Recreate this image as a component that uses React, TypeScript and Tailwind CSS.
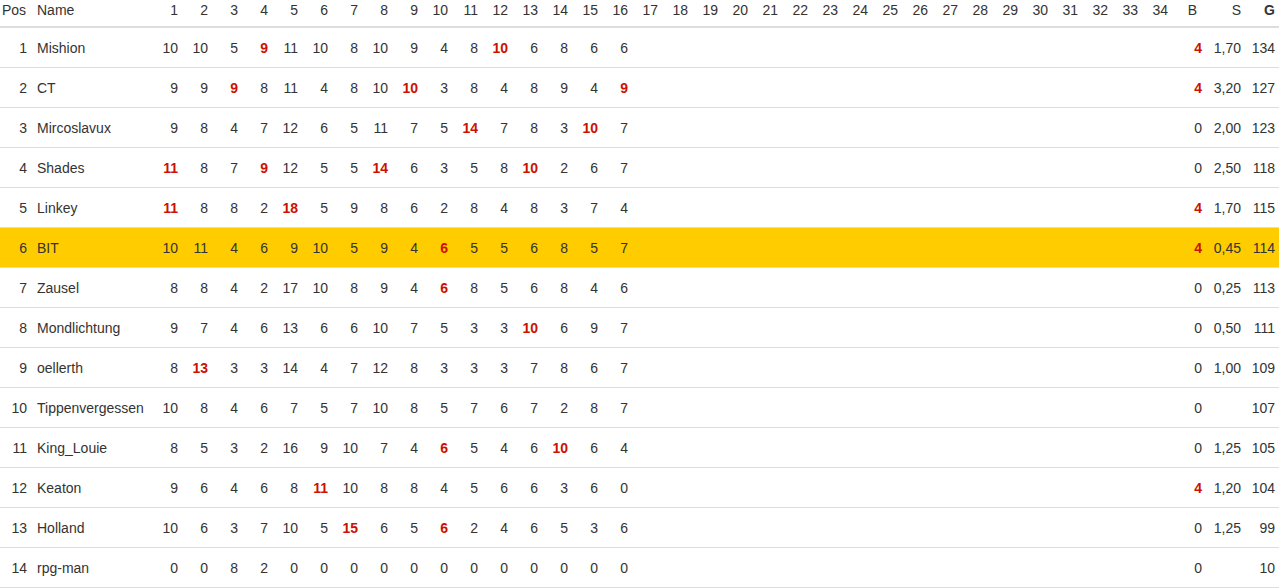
import React from "react";

type Row = {
  pos: number;
  name: string;
  // negative numbers = highlighted (bold red)
  pts: number[];
  b: number;
  s: string;
  g: number;
  me?: boolean;
};

const rows: Row[] = [
  { pos: 1, name: "Mishion", pts: [10, 10, 5, -9, 11, 10, 8, 10, 9, 4, 8, -10, 6, 8, 6, 6], b: 4, s: "1,70", g: 134 },
  { pos: 2, name: "CT", pts: [9, 9, -9, 8, 11, 4, 8, 10, -10, 3, 8, 4, 8, 9, 4, -9], b: 4, s: "3,20", g: 127 },
  { pos: 3, name: "Mircoslavux", pts: [9, 8, 4, 7, 12, 6, 5, 11, 7, 5, -14, 7, 8, 3, -10, 7], b: 0, s: "2,00", g: 123 },
  { pos: 4, name: "Shades", pts: [-11, 8, 7, -9, 12, 5, 5, -14, 6, 3, 5, 8, -10, 2, 6, 7], b: 0, s: "2,50", g: 118 },
  { pos: 5, name: "Linkey", pts: [-11, 8, 8, 2, -18, 5, 9, 8, 6, 2, 8, 4, 8, 3, 7, 4], b: 4, s: "1,70", g: 115 },
  { pos: 6, name: "BIT", pts: [10, 11, 4, 6, 9, 10, 5, 9, 4, -6, 5, 5, 6, 8, 5, 7], b: 4, s: "0,45", g: 114, me: true },
  { pos: 7, name: "Zausel", pts: [8, 8, 4, 2, 17, 10, 8, 9, 4, -6, 8, 5, 6, 8, 4, 6], b: 0, s: "0,25", g: 113 },
  { pos: 8, name: "Mondlichtung", pts: [9, 7, 4, 6, 13, 6, 6, 10, 7, 5, 3, 3, -10, 6, 9, 7], b: 0, s: "0,50", g: 111 },
  { pos: 9, name: "oellerth", pts: [8, -13, 3, 3, 14, 4, 7, 12, 8, 3, 3, 3, 7, 8, 6, 7], b: 0, s: "1,00", g: 109 },
  { pos: 10, name: "Tippenvergessen", pts: [10, 8, 4, 6, 7, 5, 7, 10, 8, 5, 7, 6, 7, 2, 8, 7], b: 0, s: "", g: 107 },
  { pos: 11, name: "King_Louie", pts: [8, 5, 3, 2, 16, 9, 10, 7, 4, -6, 5, 4, 6, -10, 6, 4], b: 0, s: "1,25", g: 105 },
  { pos: 12, name: "Keaton", pts: [9, 6, 4, 6, 8, -11, 10, 8, 8, 4, 5, 6, 6, 3, 6, 0], b: 4, s: "1,20", g: 104 },
  { pos: 13, name: "Holland", pts: [10, 6, 3, 7, 10, 5, -15, 6, 5, -6, 2, 4, 6, 5, 3, 6], b: 0, s: "1,25", g: 99 },
  { pos: 14, name: "rpg-man", pts: [0, 0, 8, 2, 0, 0, 0, 0, 0, 0, 0, 0, 0, 0, 0, 0], b: 0, s: "", g: 10 },
];

const rounds = Array.from({ length: 34 }, (_, i) => i + 1);

export default function App() {
  return (
    <div className="min-h-screen bg-white text-[14px] text-[#333] font-['Liberation_Sans',Arial,sans-serif] overflow-hidden">
      <div className="flex h-[28px] items-center pb-[6px] border-b-2 border-[#ddd] leading-none">
        <div className="w-[28px] shrink-0 text-right pr-[2px]">Pos</div>
        <div className="w-[124px] shrink-0 pl-[9px]">Name</div>
        {rounds.map((r) => (
          <div key={r} className="w-[30px] shrink-0 text-right pr-[4px]">
            {r}
          </div>
        ))}
        <div className="w-[34px] shrink-0 text-right pr-[9px]">B</div>
        <div className="w-[39px] shrink-0 text-right pr-[4px]">S</div>
        <div className="w-[34px] shrink-0 text-right pr-[4px] font-bold">G</div>
      </div>

      {rows.map((row) => (
        <div
          key={row.pos}
          className={`flex h-[40px] items-center pt-[2px] border-b border-[#ddd] ${row.me ? "bg-[#ffcc00]" : ""}`}
        >
          <div className="w-[28px] shrink-0 text-right pr-px">{row.pos}</div>
          <div className="w-[124px] shrink-0 pl-[9px] whitespace-nowrap">{row.name}</div>
          {rounds.map((r, i) => {
            const v = row.pts[i];
            const hot = v !== undefined && (v < 0 || Object.is(v, -0));
            return (
              <div
                key={r}
                className={`w-[30px] shrink-0 text-right pr-[4px] ${hot ? "font-bold text-[#cc1100]" : ""}`}
              >
                {v === undefined ? "" : Math.abs(v)}
              </div>
            );
          })}
          <div className={`w-[34px] shrink-0 text-right pr-[4px] ${row.b > 0 ? "font-bold text-[#cc1100]" : ""}`}>
            {row.b}
          </div>
          <div className="w-[39px] shrink-0 text-right pr-[4px]">{row.s}</div>
          <div className="w-[34px] shrink-0 text-right pr-[4px]">{row.g}</div>
        </div>
      ))}
    </div>
  );
}
